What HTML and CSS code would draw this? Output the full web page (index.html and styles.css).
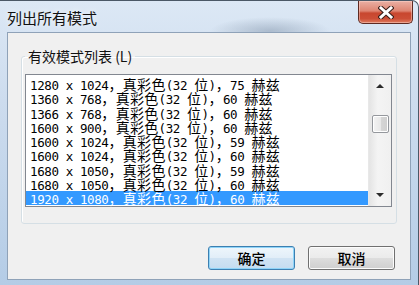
FILE: index.html
```html
<!DOCTYPE html>
<html>
<head>
  <meta charset="utf-8">
  <title>列出所有模式</title>
  <link rel="stylesheet" href="styles.css">
</head>
<body>
  <div class="window">
    <div class="titlebar">
      <span class="title">列出所有模式</span>
      <div class="close">
        <svg width="16" height="13" viewBox="0 0 16 13">
          <path d="M3 2 L13 11 M13 2 L3 11" stroke="#3b1f1a" stroke-width="5" stroke-linecap="square"/>
          <path d="M3 2 L13 11 M13 2 L3 11" stroke="#ffffff" stroke-width="3" stroke-linecap="square"/>
        </svg>
      </div>
    </div>

    <div class="client">
      <fieldset class="group">
        <legend>有效模式列表 (L)</legend>
        <div class="listbox">
          <ul class="rows">
            <li>1280 x 1024<span class="cj">，真彩色</span>(32 <span class="cj">位</span>)<span class="cj">，</span>75 <span class="cj">赫兹</span></li>
            <li>1360 x 768<span class="cj">，真彩色</span>(32 <span class="cj">位</span>)<span class="cj">，</span>60 <span class="cj">赫兹</span></li>
            <li>1366 x 768<span class="cj">，真彩色</span>(32 <span class="cj">位</span>)<span class="cj">，</span>60 <span class="cj">赫兹</span></li>
            <li>1600 x 900<span class="cj">，真彩色</span>(32 <span class="cj">位</span>)<span class="cj">，</span>60 <span class="cj">赫兹</span></li>
            <li>1600 x 1024<span class="cj">，真彩色</span>(32 <span class="cj">位</span>)<span class="cj">，</span>59 <span class="cj">赫兹</span></li>
            <li>1600 x 1024<span class="cj">，真彩色</span>(32 <span class="cj">位</span>)<span class="cj">，</span>60 <span class="cj">赫兹</span></li>
            <li>1680 x 1050<span class="cj">，真彩色</span>(32 <span class="cj">位</span>)<span class="cj">，</span>59 <span class="cj">赫兹</span></li>
            <li>1680 x 1050<span class="cj">，真彩色</span>(32 <span class="cj">位</span>)<span class="cj">，</span>60 <span class="cj">赫兹</span></li>
            <li class="selected">1920 x 1080<span class="cj">，真彩色</span>(32 <span class="cj">位</span>)<span class="cj">，</span>60 <span class="cj">赫兹</span></li>
          </ul>
          <div class="scroll">
            <div class="arrow up"></div>
            <div class="track"><div class="thumb"></div></div>
            <div class="arrow down"></div>
          </div>
        </div>
      </fieldset>

      <div class="actions">
        <button class="btn default">确定</button>
        <button class="btn">取消</button>
      </div>
    </div>
  </div>
</body>
</html>
```

FILE: styles.css
```css
body {
  margin: 0;
  background: #ffffff;
}
.window {
  width: 419px;
  height: 285px;
  box-sizing: border-box;
  display: flex;
  flex-direction: column;
  padding: 0 7px 5px 7px;
  border-top: 1px solid #4b5866;
  border-right: 1px solid #4b5866;
  border-top-right-radius: 7px;
  background:
    radial-gradient(ellipse 60px 14px at 270px 30px, rgba(90, 110, 135, 0.35), rgba(90, 110, 135, 0)),
    linear-gradient(180deg, #dce8f5 0%, #cddcee 35%, #b4cce6 100%);
  overflow: hidden;
}
.titlebar {
  height: 31px;
  display: flex;
  justify-content: space-between;
  align-items: flex-start;
}
.title {
  font-family: "Noto Sans CJK SC", sans-serif;
  font-size: 15px;
  line-height: 20px;
  padding-top: 7px;
  color: #111;
  text-shadow: 0 0 6px rgba(255, 255, 255, 0.9);
}
.close {
  width: 55px;
  height: 23px;
  margin-right: -2px;
  box-sizing: border-box;
  border: 1px solid #5e2a22;
  border-top: none;
  border-radius: 0 0 5px 5px;
  background: linear-gradient(180deg, #eab0a4 0%, #de8572 45%, #c8472f 55%, #cc4e36 80%, #df7d60 100%);
  box-shadow: inset 0 0 0 1px rgba(255, 220, 210, 0.45);
  display: flex;
  align-items: center;
  justify-content: center;
}
.client {
  flex: 1;
  background: #f0f0f0;
  border: 1px solid #8fa2b8;
  padding: 13px 13px 0 13px;
}
.group {
  margin: 0;
  padding: 8px 4px 16px 3px;
  border: 1px solid #d5dfe5;
  border-radius: 3px;
  box-shadow: inset 1px 1px 0 #ffffff;
  min-width: 0;
}
.group legend {
  font-family: "Noto Sans CJK SC", sans-serif;
  font-size: 14px;
  line-height: 20px;
  padding: 0 3px;
  color: #111;
}
.listbox {
  height: 133px;
  box-sizing: border-box;
  border: 1px solid #828790;
  background: #ffffff;
  display: flex;
}
.rows {
  flex: 1;
  list-style: none;
  margin: 0;
  padding: 2px 0 0 0;
}
.rows li {
  height: 14.25px;
  line-height: 14.25px;
  padding-left: 4px;
  white-space: pre;
  font-family: "DejaVu Sans Mono", monospace;
  font-size: 12.5px;
  letter-spacing: -0.39px;
  color: #000;
}
.rows .cj {
  font-family: "Noto Sans CJK SC", sans-serif;
  font-size: 14px;
  letter-spacing: 0.3px;
  line-height: 14.25px;
}
.rows li.selected {
  background: #3399ff;
  color: #ffffff;
}
.scroll {
  width: 22px;
  border-left: 1px solid #e8e8e8;
  background: linear-gradient(90deg, #e4e4e4, #f4f4f4 40%, #f0f0f0);
  display: flex;
  flex-direction: column;
  align-items: center;
}
.arrow {
  width: 0;
  height: 0;
  border-left: 4px solid transparent;
  border-right: 4px solid transparent;
}
.arrow.up {
  border-bottom: 4px solid #2b2b2b;
  margin: 9px 0 7px 0;
}
.arrow.down {
  border-top: 4px solid #2b2b2b;
  margin: 7px 0 9px 0;
}
.track {
  flex: 1;
  width: 100%;
  display: flex;
  justify-content: center;
}
.thumb {
  width: 17px;
  height: 18px;
  box-sizing: border-box;
  margin-top: 20px;
  border: 1px solid #95989d;
  border-radius: 2px;
  background: linear-gradient(90deg, #f4f4f4 0%, #e8e8e8 50%, #d6d6d6 51%, #cfcfcf 100%);
  box-shadow: inset 0 0 0 1px #ffffff;
}
.actions {
  display: flex;
  justify-content: flex-end;
  gap: 13px;
  margin-top: 22px;
  margin-right: 2px;
}
.btn {
  width: 87px;
  height: 24px;
  box-sizing: border-box;
  border: 1px solid #707070;
  border-radius: 3px;
  background: linear-gradient(180deg, #f2f2f2 0%, #ebebeb 48%, #dddddd 52%, #cfcfcf 100%);
  box-shadow: inset 0 0 0 1px #fcfcfc;
  font-family: "Noto Sans CJK SC", sans-serif;
  font-size: 14px;
  font-weight: 500;
  color: #000;
  padding: 0;
}
.btn.default {
  border-color: #3c7fb1;
  background: linear-gradient(180deg, #eef6fc 0%, #e2eef8 48%, #d0e3f3 52%, #c4dcf0 100%);
  box-shadow: inset 0 0 0 1px #8fd4f8;
}
```
